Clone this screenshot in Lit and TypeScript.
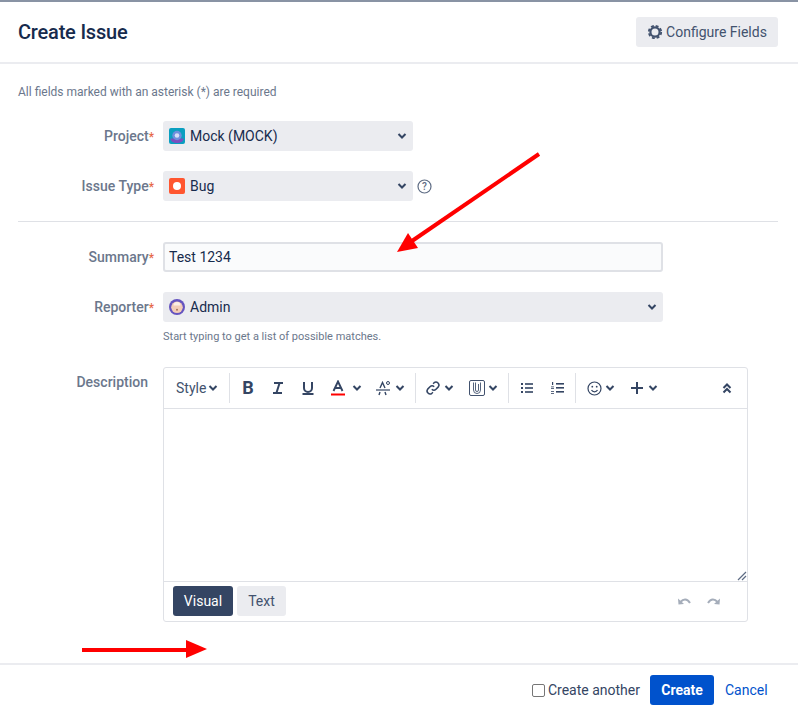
import { LitElement, html, css, svg } from "lit";
import { customElement } from "lit/decorators.js";

const chev = html`<svg class="chev" width="10" height="8" viewBox="0 0 10 8"><path d="M1.5 2 L5 5.5 L8.5 2" fill="none" stroke="#344563" stroke-width="2"/></svg>`;

@customElement("app-root")
export class AppRoot extends LitElement {
  static styles = css`
    :host { display: block; width: 798px; height: 715px; position: relative; overflow: hidden; background: #fff;
      font-family: Roboto, "Liberation Sans", sans-serif; font-size: 14px; color: #172b4d; }
    .top { height: 2px; background: #8993a4; }
    .header { height: 60px; display: flex; align-items: center; justify-content: space-between; padding: 0 20px 0 18px; border-bottom: 2px solid #ebecf0; }
    h2 { margin: 0; font-size: 20px; font-weight: 500; color: #172b4d; line-height: 24px; letter-spacing: -0.2px; }
    .cfg { height: 30px; width: 142px; box-sizing: border-box; background: #ebecf0; border-radius: 3px; display: flex; align-items: center; justify-content: center; gap: 3px; color: #42526e; }
    .body { padding: 21px 20px 0 18px; height: 599px; box-sizing: border-box; }
    .note { font-size: 12px; line-height: 15px; color: #6b778c; height: 15px; }
    .row { display: flex; align-items: flex-start; }
    .label { width: 136px; height: 30px; text-align: right; padding-right: 9px; flex: none; line-height: 30px; color: #6b778c; font-weight: 500; white-space: nowrap; }
    .label i { color: #de350b; font-style: normal; font-size: 12px; opacity: .75; }
    .label.plain { width: 130px; padding-right: 15px; }
    .sel { height: 30px; box-sizing: border-box; background: #ebecf0; border-radius: 3px; display: flex; align-items: center; padding: 0 6px; gap: 5px; color: #172b4d; }
    .sel .txt { flex: 1; }
    .w250 { width: 250px; }
    .w500 { width: 500px; }
    .r1 { margin-top: 21px; }
    .r2 { margin-top: 20px; align-items: center; }
    .r3 { margin-top: 20px; }
    .help { margin-left: 4px; display: block; }
    hr { border: 0; border-top: 1px solid #dfe1e6; margin: 20px 0; }
    .input { height: 30px; width: 500px; box-sizing: border-box; border: 2px solid #dfe1e6; border-radius: 3px; background: #fafbfc; padding: 0 4px; line-height: 26px; }
    .hint { font-size: 11px; line-height: 14px; color: #6b778c; margin-top: 8px; }
    .editor { width: 585px; height: 255px; box-sizing: border-box; border: 1px solid #dfe1e6; border-radius: 3px; display: flex; flex-direction: column; }
    .desc { margin-top: 23px; }
    .toolbar { height: 40px; flex: none; border-bottom: 1px solid #dfe1e6; display: flex; align-items: center; color: #42526e; }
    .tb { display: flex; align-items: center; height: 30px; flex: none; }
    .sep { width: 1px; height: 30px; background: #dfe1e6; flex: none; }
    .sep.m10 { margin-left: 10px; }
    .sep.m11 { margin-left: 11px; }
    .style { width: 65px; padding-left: 12px; box-sizing: border-box; gap: 2px; color: #42526e; }
    .tool { display: flex; align-items: center; flex: none; }
    .bold { width: 14px; text-align: center; font-size: 18px; font-weight: 700; color: #344563; line-height: 1; }
    .collapse { margin-left: auto; width: 40px; justify-content: center; }
    .area { flex: 1; border-bottom: 1px solid #dfe1e6; position: relative; }
    .grip { position: absolute; right: 0; bottom: 0; display: block; }
    .tabs { height: 39px; box-sizing: border-box; flex: none; display: flex; align-items: flex-start; padding: 4px 9px 0; gap: 4px; }
    .tab { height: 30px; box-sizing: border-box; border-radius: 3px; display: flex; align-items: center; justify-content: center; }
    .tab.on { width: 60px; background: #344563; color: #fff; }
    .tab.off { width: 49px; background: #ebecf0; color: #42526e; }
    .undo { margin-left: auto; margin-top: 10px; display: flex; gap: 16px; padding-right: 17px; }
    .undo svg { display: block; }
    .footer { height: 50px; border-top: 2px solid #ebecf0; display: flex; align-items: center; justify-content: flex-end; padding: 0 31px 0 0; }
    .check { display: flex; align-items: center; color: #344563; gap: 3px; margin-right: 10px; }
    .box { width: 13px; height: 13px; border: 1px solid #767676; border-radius: 2px; background: #fff; box-sizing: border-box; display: block; }
    .create { width: 64px; height: 30px; border-radius: 3px; background: #0052cc; color: #fff; font-weight: 700; display: flex; align-items: center; justify-content: center; margin-right: 11px; }
    .cancel { color: #0052cc; width: 42px; }
    .overlay { position: absolute; left: 0; top: 0; pointer-events: none; }
  `;

  tool(left: number, icon: unknown, chevGap = -1) {
    return html`<span class="tool" style="margin-left:${left}px;gap:${Math.max(chevGap, 0)}px">${icon}${chevGap >= 0 ? chev : ""}</span>`;
  }

  render() {
    const bold = html`<span class="bold">B</span>`;
    const ital = svg`<svg width="14" height="14" viewBox="0 0 14 14"><path d="M3 2h9M2 12h9M8.6 2 5.4 12" fill="none" stroke="#344563" stroke-width="2"/></svg>`;
    const under = svg`<svg width="14" height="14" viewBox="0 0 14 14"><path d="M3 1v6a4 4 0 0 0 8 0V1M1.5 13h11" fill="none" stroke="#344563" stroke-width="2"/></svg>`;
    const colorA = svg`<svg width="14" height="16" viewBox="0 0 14 16"><path d="M2.5 11 7 1.5 11.5 11M4 8h6" fill="none" stroke="#344563" stroke-width="1.9"/><rect y="13.5" width="14" height="2" fill="#ff0000"/></svg>`;
    const fmt = svg`<svg width="16" height="15" viewBox="0 0 16 15"><path d="M0 9h14" stroke="#344563" stroke-width="1.2"/><path d="M4 7 6.5 1.5 9 7M4 11l-1 3M9 11l1 3" fill="none" stroke="#344563" stroke-width="1.4"/><circle cx="12" cy="2" r="1.5" fill="none" stroke="#344563"/></svg>`;
    const link = svg`<svg width="16" height="16" viewBox="0 0 16 16" fill="none" stroke="#344563" stroke-width="1.5"><path d="M6.8 9.2a3 3 0 0 0 4.2 0l2.3-2.3a3 3 0 0 0-4.2-4.2l-1 1"/><path d="M9.2 6.8a3 3 0 0 0-4.2 0L2.7 9.1a3 3 0 0 0 4.2 4.2l1-1"/></svg>`;
    const clip = svg`<svg width="16" height="16" viewBox="0 0 16 16" fill="none" stroke="#42526e"><rect x=".5" y=".5" width="15" height="15" rx="1.5"/><path d="M4.5 2.5v7.5a3.5 3.5 0 0 0 7 0V2.5M6.5 2.5v7.5a1.5 1.5 0 0 0 3 0V4" stroke-width=".9"/></svg>`;
    const ul = svg`<svg width="12" height="10" viewBox="0 0 12 10" fill="#344563"><rect y="0" width="2" height="2"/><rect y="4" width="2" height="2"/><rect y="8" width="2" height="2"/><rect x="4" y=".2" width="8" height="1.6"/><rect x="4" y="4.2" width="8" height="1.6"/><rect x="4" y="8.2" width="8" height="1.6"/></svg>`;
    const ol = svg`<svg width="13" height="12" viewBox="0 0 13 12" fill="#344563"><rect x="1" y="0" width="1.2" height="3"/><rect x="0" y="4.5" width="3" height=".8"/><rect x="0" y="6.2" width="3" height=".8"/><rect x="0" y="9" width="3" height=".8"/><rect x="0" y="11" width="3" height=".8"/><rect x="5" y="1" width="8" height="1.6"/><rect x="5" y="5" width="8" height="1.6"/><rect x="5" y="9" width="8" height="1.6"/></svg>`;
    const smile = svg`<svg width="15" height="15" viewBox="0 0 15 15" fill="none" stroke="#344563" stroke-width="1.2"><circle cx="7.5" cy="7.5" r="6.5"/><path d="M4.5 9a3.4 3.4 0 0 0 6 0"/><circle cx="5.3" cy="5.7" r=".9" fill="#344563" stroke="none"/><circle cx="9.7" cy="5.7" r=".9" fill="#344563" stroke="none"/></svg>`;
    const plus = svg`<svg width="14" height="14" viewBox="0 0 14 14"><path d="M7 1v12M1 7h12" stroke="#344563" stroke-width="2"/></svg>`;
    const collapse = svg`<svg width="10" height="11" viewBox="0 0 10 11" fill="none" stroke="#344563" stroke-width="2"><path d="M1.5 5 5 1.5 8.5 5M1.5 9.5 5 6 8.5 9.5"/></svg>`;
    return html`
      <div class="top"></div>
      <div class="header">
        <h2>Create Issue</h2>
        <div class="cfg">
          <svg width="16" height="16" viewBox="0 0 16 16" fill="none" stroke="#42526e"><circle cx="8" cy="8" r="4.6" stroke-width="2.2"/><circle cx="8" cy="8" r="6.2" stroke-width="1.8" stroke-dasharray="2.9 1.97"/></svg>
          Configure Fields
        </div>
      </div>
      <div class="body">
        <div class="note">All fields marked with an asterisk (*) are required</div>
        <div class="row r1">
          <div class="label">Project<i>*</i></div>
          <div class="sel w250">
            <svg width="16" height="16" viewBox="0 0 16 16"><rect width="16" height="16" rx="2" fill="#0a9fc0"/><path d="M1.5 10.5h13c0 3-3 4.5-6.5 4.5s-6.5-1.5-6.5-4.5Z" fill="#7a4fc0"/><circle cx="8" cy="7.5" r="4.7" fill="#6f8fdc"/><circle cx="8" cy="7.5" r="2.3" fill="#d5def7"/></svg>
            <span class="txt">Mock (MOCK)</span>${chev}
          </div>
        </div>
        <div class="row r2">
          <div class="label">Issue Type<i>*</i></div>
          <div class="sel w250">
            <svg width="16" height="16" viewBox="0 0 16 16"><rect width="16" height="16" rx="2" fill="#ff5630"/><circle cx="8" cy="8" r="4" fill="#fff"/></svg>
            <span class="txt">Bug</span>${chev}
          </div>
          <svg class="help" width="15" height="15" viewBox="0 0 15 15"><circle cx="7.5" cy="7.5" r="6.5" fill="none" stroke="#5e6c84" stroke-width="1.2"/><text x="7.5" y="11" text-anchor="middle" font-family="Roboto" font-size="10" font-weight="500" fill="#5e6c84">?</text></svg>
        </div>
        <hr />
        <div class="row">
          <div class="label">Summary<i>*</i></div>
          <div class="input">Test 1234</div>
        </div>
        <div class="row r3">
          <div class="label">Reporter<i>*</i></div>
          <div>
            <div class="sel w500">
              <svg width="16" height="16" viewBox="0 0 16 16"><circle cx="8" cy="8" r="8" fill="#6554c0"/><circle cx="8" cy="8.3" r="5.8" fill="#f3cdb8"/><path d="M4.5 6.5a3.5 3.5 0 0 1 7 0Z" fill="#fbeee6"/><circle cx="8" cy="10.8" r="1" fill="#a5735a"/></svg>
              <span class="txt">Admin</span>${chev}
            </div>
            <div class="hint">Start typing to get a list of possible matches.</div>
          </div>
        </div>
        <div class="row desc">
          <div class="label plain">Description</div>
          <div class="editor">
            <div class="toolbar">
              <div class="tb style">Style${chev}</div>
              <span class="sep"></span>
              <div class="tb">
                ${this.tool(11, bold)}${this.tool(16, ital)}${this.tool(16, under)}
                ${this.tool(16, colorA, 7)}${this.tool(14, fmt, 3)}
              </div>
              <span class="sep m10"></span>
              <div class="tb">${this.tool(9, link, 3)}${this.tool(15, clip, 3)}</div>
              <span class="sep m10"></span>
              <div class="tb">${this.tool(12, ul)}${this.tool(18, ol)}</div>
              <span class="sep m11"></span>
              <div class="tb">${this.tool(11, smile, 3)}${this.tool(15, plus, 4)}</div>
              <div class="tb collapse">${collapse}</div>
            </div>
            <div class="area">
              <svg class="grip" width="10" height="10" viewBox="0 0 10 10"><path d="M1 9 9 1M5 9 9 5" stroke="#5e6c84" stroke-width="1.2"/></svg>
            </div>
            <div class="tabs">
              <div class="tab on">Visual</div>
              <div class="tab off">Text</div>
              <div class="undo">
                <svg width="14" height="10" viewBox="0 0 14 10"><path d="M3.5 6c3-3.5 6.5-3.5 9.5 1" fill="none" stroke="#a5adba" stroke-width="2"/><path d="M1 2.5 1.5 8.5 7 8Z" fill="#a5adba"/></svg>
                <svg width="14" height="10" viewBox="0 0 14 10"><path d="M10.5 6C7.5 2.5 4 2.5 1 7" fill="none" stroke="#a5adba" stroke-width="2"/><path d="M13 2.5 12.5 8.5 7 8Z" fill="#a5adba"/></svg>
              </div>
            </div>
          </div>
        </div>
      </div>
      <div class="footer">
        <label class="check"><span class="box"></span>Create another</label>
        <div class="create">Create</div>
        <div class="cancel">Cancel</div>
      </div>
      <svg class="overlay" width="798" height="715" viewBox="0 0 798 715">
        <path d="M539 154 412 241" stroke="#ff0000" stroke-width="4"/>
        <path d="M397 252 408 233 418 248Z" fill="#ff0000"/>
        <path d="M82 650H190" stroke="#ff0000" stroke-width="4"/>
        <path d="M186 640 207 649 186 658Z" fill="#ff0000"/>
      </svg>
    `;
  }
}
